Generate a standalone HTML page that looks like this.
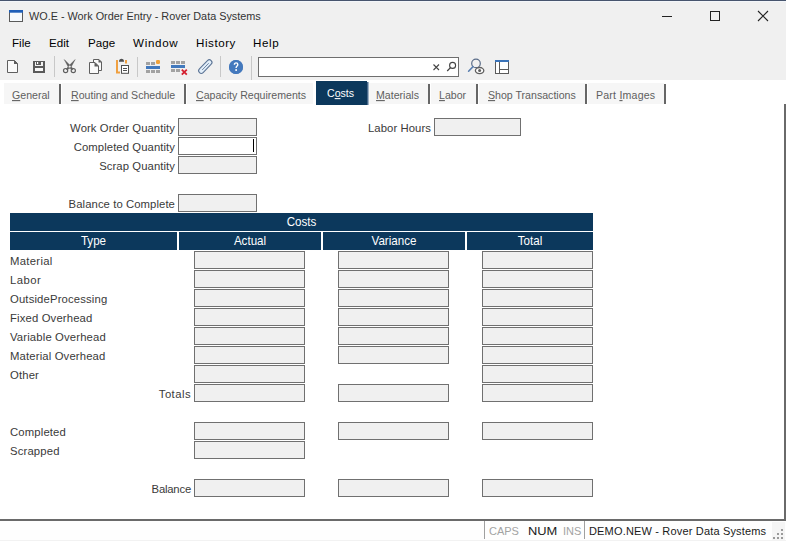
<!DOCTYPE html>
<html><head><meta charset="utf-8">
<style>
*{margin:0;padding:0;box-sizing:border-box}
html,body{width:786px;height:541px;overflow:hidden;background:#fff}
body{position:relative;font-family:"Liberation Sans",sans-serif;color:#222}
.a{position:absolute;white-space:nowrap;line-height:1}
#chrome{position:absolute;left:0;top:0;width:786px;height:80px;background:#f0f0f0}
#topline{position:absolute;left:0;top:0;width:786px;height:1px;background:#47556e}
.menu{font-size:11.6px;color:#000;top:37px}
.title{font-size:10.85px;color:#333;top:11px}
.sep{position:absolute;width:1px;background:#c9c9c9}
.tabbg{position:absolute;top:83px;height:21px;background:#f6f6f6}
.tsep{position:absolute;top:84px;width:2px;height:20px;background:#666}
.tab{font-size:10.6px;color:#5e5e5e;top:90px;transform:scaleY(1.07);transform-origin:0 9px}
.tab u{text-decoration:underline;text-underline-offset:1px}
.lbl{font-size:11.3px;color:#3a3a3a;margin-top:1px;letter-spacing:0.15px}
.fld{position:absolute;height:18px;border:1px solid #707070;background:#f0f0f0}
.hdr{position:absolute;background:#0c385c}
.htx{font-size:11.6px;color:#fff;transform:scaleY(1.1);transform-origin:50% 9.8px}
.sb{font-size:11px;top:526px}
</style></head><body>
<div id="chrome"></div>
<div id="topline"></div><div class="a" style="left:0;top:1px;width:786px;height:1px;background:#f3f6fa"></div>

<!-- title bar -->
<svg class="a" style="left:8px;top:9px" width="16" height="14" viewBox="0 0 16 14">
  <rect x="1.5" y="1.5" width="13" height="11" fill="#f6fafd" stroke="#5a5a5a" stroke-width="1"/>
  <rect x="1" y="1" width="14" height="2.7" fill="#1f5fb8"/>
</svg>
<div class="a title" style="left:29px">WO.E - Work Order Entry - Rover Data Systems</div>
<div class="a" style="left:662px;top:16px;width:10px;height:1px;background:#222"></div>
<div class="a" style="left:710px;top:11px;width:10px;height:10px;border:1px solid #222"></div>
<svg class="a" style="left:757px;top:10px" width="12" height="12" viewBox="0 0 12 12"><path d="M1 1L11 11M11 1L1 11" stroke="#222" stroke-width="1.1"/></svg>

<!-- menu -->
<div class="a menu" style="left:12px">File</div>
<div class="a menu" style="left:49px">Edit</div>
<div class="a menu" style="left:88px">Page</div>
<div class="a menu" style="left:133px;letter-spacing:0.7px">Window</div>
<div class="a menu" style="left:196px;letter-spacing:0.55px">History</div>
<div class="a menu" style="left:253px;letter-spacing:0.6px">Help</div>

<!-- toolbar -->
<div id="toolbar"><svg class="a" style="left:0;top:50px" width="520" height="30" viewBox="0 50 520 30">
 <!-- new -->
 <path d="M7.5 60.5H14.5L17.5 63.5V72.5H7.5Z" fill="#fafafa" stroke="#5f5f5f" stroke-width="1"/>
 <path d="M14 60L18 64H14Z" fill="#5f5f5f"/>
 <!-- save -->
 <rect x="33" y="61" width="12" height="12" fill="#5a5a5a"/>
 <rect x="35" y="62" width="8" height="4" fill="#f2f2f2"/>
 <rect x="36" y="61" width="5" height="4" fill="#5a5a5a"/>
 <rect x="37" y="62" width="1.2" height="2" fill="#fff"/>
 <rect x="35" y="68" width="8" height="3" fill="#f7f7f7"/>
 <!-- sep -->
 <rect x="54" y="56" width="1" height="21" fill="#c8c8c8"/>
 <!-- scissors -->
 <path d="M64.3 59.6L71.2 66.6L73.2 69.2L72.2 69.8L68.4 67.2Z M75.1 59.6L68.2 66.6L66.2 69.2L67.2 69.8L71 67.2Z" fill="#5f5f5f" stroke="#5f5f5f" stroke-width="0.5" stroke-linejoin="round"/>
 <circle cx="65.6" cy="70.6" r="2.1" fill="none" stroke="#5f5f5f" stroke-width="1.2"/>
 <circle cx="73.3" cy="70.6" r="2.1" fill="none" stroke="#5f5f5f" stroke-width="1.2"/>
 <!-- copy -->
 <path d="M93.5 59.5H99L101.5 62V70.5H93.5Z" fill="#fafafa" stroke="#5f5f5f" stroke-width="1"/>
 <path d="M98.5 59L102 62.5H98.5Z" fill="#5f5f5f"/>
 <path d="M89.5 62.5H95L98.5 66V73.5H89.5Z" fill="#fafafa" stroke="#5f5f5f" stroke-width="1"/>
 <path d="M94.5 62L99 66.5H94.5Z" fill="#5f5f5f"/>
 <!-- paste -->
 <path d="M117 60V72.5H120" fill="none" stroke="#f0a040" stroke-width="2"/>
 <rect x="125" y="60" width="2" height="3.5" fill="#f0a040"/>
 <path d="M119 61.8H124V60.5Q123.5 58.8 121.5 58.8Q119.5 58.8 119 60.5Z" fill="#505050"/>
 <rect x="121.5" y="65.5" width="7" height="7.8" fill="#fff" stroke="#505050" stroke-width="1"/>
 <rect x="123" y="68" width="4" height="1" fill="#505050"/>
 <rect x="123" y="70" width="4" height="1" fill="#505050"/>
 <!-- sep -->
 <rect x="137" y="57" width="1" height="20" fill="#c8c8c8"/>
 <!-- insert rows -->
 <rect x="146" y="62" width="4" height="3" fill="#a2a2a2"/>
 <rect x="151" y="62" width="4" height="3" fill="#a2a2a2"/>
 <rect x="156" y="60" width="4" height="4" rx="1.2" fill="#f2a33a"/>
 <rect x="146" y="66" width="14" height="3" fill="#4279bd"/>
 <rect x="146" y="70" width="4" height="3" fill="#a2a2a2"/>
 <rect x="151" y="70" width="4" height="3" fill="#a2a2a2"/>
 <rect x="156" y="70" width="4" height="3" fill="#a2a2a2"/>
 <!-- delete rows -->
 <rect x="171" y="61" width="4" height="3" fill="#a2a2a2"/>
 <rect x="176" y="61" width="4" height="3" fill="#a2a2a2"/>
 <rect x="181" y="61" width="4" height="3" fill="#a2a2a2"/>
 <rect x="171" y="65" width="14" height="3" fill="#4279bd"/>
 <rect x="171" y="69" width="4" height="3" fill="#a2a2a2"/>
 <rect x="176" y="69" width="4" height="3" fill="#a2a2a2"/>
 <path d="M181.8 69.6L186.8 74.6M186.8 69.6L181.8 74.6" stroke="#d42030" stroke-width="1.8"/>
 <!-- paperclip -->
 <g transform="translate(205.3 66.6) rotate(-46)">
  <rect x="-8.4" y="-2.6" width="16.8" height="5.2" rx="2.6" fill="#e2eef9" stroke="#5d7596" stroke-width="1.1"/>
  <path d="M4.8 0.1H-4.6" stroke="#6a80a0" stroke-width="0.9"/>
 </g>
 <!-- sep -->
 <rect x="220" y="56" width="1" height="21" fill="#c8c8c8"/>
 <!-- help -->
 <circle cx="236" cy="67" r="7" fill="#3d72b8"/>
 <circle cx="236" cy="67" r="7" fill="#4479bd"/>
 <path d="M234.4 64.8Q234.4 62.9 236.1 62.9Q237.8 62.9 237.8 64.6Q237.8 65.6 236.9 66.2Q236.1 66.8 236.1 68" fill="none" stroke="#fff" stroke-width="1.4"/>
 <rect x="235.3" y="69.2" width="1.7" height="1.7" fill="#fff"/>
 <!-- sep -->
 <rect x="251" y="56" width="1" height="24" fill="#c8c8c8"/>
 <!-- search box -->
 <rect x="258.5" y="57.5" width="200" height="19" fill="#fff" stroke="#6e6e6e" stroke-width="1"/>
 <path d="M433.5 64.5L439 70M439 64.5L433.5 70" stroke="#444" stroke-width="1.1"/>
 <circle cx="452.6" cy="65.4" r="3.0" fill="none" stroke="#444" stroke-width="1.1"/>
 <path d="M450.5 67.6L447.2 71.0" stroke="#444" stroke-width="1.3"/>
 <!-- find eye -->
 <circle cx="476" cy="63.4" r="4.3" fill="none" stroke="#5a6c88" stroke-width="1.2"/>
 <path d="M473 66.6L468.6 71.2" stroke="#5a7fb0" stroke-width="1.6" stroke-linecap="round"/>
 <ellipse cx="479.6" cy="70.6" rx="4.2" ry="3.1" fill="#fff" stroke="#5f5f5f" stroke-width="1.3"/>
 <circle cx="479.6" cy="70.6" r="1.5" fill="#5f5f5f"/>
 <!-- layout -->
 <rect x="495.5" y="60.5" width="13" height="13" fill="#fff" stroke="#5a5a5a" stroke-width="1"/>
 <rect x="495" y="60" width="14" height="2" fill="#3a73b8"/>
 <path d="M499.5 62V73.5M499.5 69.5H508.5" stroke="#5a5a5a" stroke-width="1"/>
</svg>
</div><!--/tb-->

<!-- tabs -->
<div class="tabbg" style="left:4px;width:309px"></div><div class="tabbg" style="left:369px;width:295px"></div>
<div class="tsep" style="left:59px"></div><div class="a" style="left:61px;top:83px;width:1px;height:21px;background:#fff"></div>
<div class="tsep" style="left:184px"></div><div class="a" style="left:186px;top:83px;width:1px;height:21px;background:#fff"></div>
<div class="a" style="left:367px;top:82px;height:23px;width:1px;background:#46678a"></div><div class="a" style="left:368px;top:82px;height:23px;width:1px;background:#9fb2c4"></div>
<div class="tsep" style="left:428px"></div><div class="a" style="left:430px;top:83px;width:1px;height:21px;background:#fff"></div>
<div class="tsep" style="left:476px"></div><div class="a" style="left:478px;top:83px;width:1px;height:21px;background:#fff"></div>
<div class="tsep" style="left:585px"></div><div class="a" style="left:587px;top:83px;width:1px;height:21px;background:#fff"></div>
<div class="tsep" style="left:664px"></div><div class="a" style="left:666px;top:83px;width:1px;height:21px;background:#fff"></div>
<div class="a" style="left:316px;top:81px;width:51px;height:24px;background:#0c385c"></div>
<div class="a tab" style="left:12px"><u>G</u>eneral</div>
<div class="a tab" style="left:71px"><u>R</u>outing and Schedule</div>
<div class="a tab" style="left:196px"><u>C</u>apacity Requirements</div>
<div class="a tab" style="left:327px;top:88px;color:#fff">C<u>o</u>sts</div>
<div class="a tab" style="left:376px"><u>M</u>aterials</div>
<div class="a tab" style="left:439px"><u>L</u>abor</div>
<div class="a tab" style="left:488px"><u>S</u>hop Transactions</div>
<div class="a tab" style="left:596px;letter-spacing:0.2px">Part <u>I</u>mages</div>

<!-- content frame -->
<div class="a" style="left:784px;top:104px;width:2px;height:416px;background:#6a6a6a"></div>
<div class="a" style="left:0;top:519px;width:786px;height:2px;background:#6a6a6a"></div>

<div id="form"><div class="a lbl" style="right:611px;top:122px;letter-spacing:0.08px">Work Order Quantity</div>
<div class="fld" style="left:178px;top:118px;width:79px"></div>
<div class="a lbl" style="right:611px;top:141px;letter-spacing:0.08px">Completed Quantity</div>
<div class="fld" style="left:178px;top:137px;width:79px;background:#fff"></div>
<div class="a lbl" style="right:611px;top:160px;letter-spacing:0.08px">Scrap Quantity</div>
<div class="fld" style="left:178px;top:156px;width:79px"></div>
<div class="a lbl" style="right:611px;top:198px;letter-spacing:0.08px">Balance to Complete</div>
<div class="fld" style="left:178px;top:194px;width:79px"></div>
<div class="a" style="left:253px;top:139px;width:1px;height:13px;background:#000"></div>
<div class="a lbl" style="right:355px;top:122px;letter-spacing:0.08px">Labor Hours</div>
<div class="fld" style="left:434px;top:118px;width:87px"></div>
<div class="hdr" style="left:10px;top:213px;width:583px;height:18px"></div>
<div class="a htx" style="left:10px;width:583px;text-align:center;top:216.2px">Costs</div>
<div class="hdr" style="left:10px;top:232px;width:167px;height:18px"></div>
<div class="a htx" style="left:10px;width:167px;text-align:center;top:235.2px">Type</div>
<div class="hdr" style="left:179px;top:232px;width:142px;height:18px"></div>
<div class="a htx" style="left:179px;width:142px;text-align:center;top:235.2px">Actual</div>
<div class="hdr" style="left:323px;top:232px;width:142px;height:18px"></div>
<div class="a htx" style="left:323px;width:142px;text-align:center;top:235.2px">Variance</div>
<div class="hdr" style="left:467px;top:232px;width:126px;height:18px"></div>
<div class="a htx" style="left:467px;width:126px;text-align:center;top:235.2px">Total</div>
<div class="a lbl" style="left:10px;top:255px;letter-spacing:0.3px">Material</div>
<div class="fld" style="left:194px;top:251px;width:111px"></div>
<div class="fld" style="left:338px;top:251px;width:111px"></div>
<div class="fld" style="left:482px;top:251px;width:111px"></div>
<div class="a lbl" style="left:10px;top:274px;letter-spacing:0.45px">Labor</div>
<div class="fld" style="left:194px;top:270px;width:111px"></div>
<div class="fld" style="left:338px;top:270px;width:111px"></div>
<div class="fld" style="left:482px;top:270px;width:111px"></div>
<div class="a lbl" style="left:10px;top:293px">OutsideProcessing</div>
<div class="fld" style="left:194px;top:289px;width:111px"></div>
<div class="fld" style="left:338px;top:289px;width:111px"></div>
<div class="fld" style="left:482px;top:289px;width:111px"></div>
<div class="a lbl" style="left:10px;top:312px">Fixed Overhead</div>
<div class="fld" style="left:194px;top:308px;width:111px"></div>
<div class="fld" style="left:338px;top:308px;width:111px"></div>
<div class="fld" style="left:482px;top:308px;width:111px"></div>
<div class="a lbl" style="left:10px;top:331px">Variable Overhead</div>
<div class="fld" style="left:194px;top:327px;width:111px"></div>
<div class="fld" style="left:338px;top:327px;width:111px"></div>
<div class="fld" style="left:482px;top:327px;width:111px"></div>
<div class="a lbl" style="left:10px;top:350px">Material Overhead</div>
<div class="fld" style="left:194px;top:346px;width:111px"></div>
<div class="fld" style="left:338px;top:346px;width:111px"></div>
<div class="fld" style="left:482px;top:346px;width:111px"></div>
<div class="a lbl" style="left:10px;top:369px">Other</div>
<div class="fld" style="left:194px;top:365px;width:111px"></div>
<div class="fld" style="left:482px;top:365px;width:111px"></div>
<div class="a lbl" style="right:595px;top:388px;letter-spacing:0.45px">Totals</div>
<div class="fld" style="left:194px;top:384px;width:111px"></div>
<div class="fld" style="left:338px;top:384px;width:111px"></div>
<div class="fld" style="left:482px;top:384px;width:111px"></div>
<div class="a lbl" style="left:10px;top:426px">Completed</div>
<div class="fld" style="left:194px;top:422px;width:111px"></div>
<div class="fld" style="left:338px;top:422px;width:111px"></div>
<div class="fld" style="left:482px;top:422px;width:111px"></div>
<div class="a lbl" style="left:10px;top:445px">Scrapped</div>
<div class="fld" style="left:194px;top:441px;width:111px"></div>
<div class="a lbl" style="right:595px;top:483px;letter-spacing:-0.2px">Balance</div>
<div class="fld" style="left:194px;top:479px;width:111px"></div>
<div class="fld" style="left:338px;top:479px;width:111px"></div>
<div class="fld" style="left:482px;top:479px;width:111px"></div></div><!--/form-->

<!-- status bar -->
<div class="a" style="left:0;top:521px;width:786px;height:20px;background:#fefefe"></div><div class="a" style="left:0;top:540px;width:786px;height:1px;background:#f2f2f2"></div>
<div class="a" style="left:484px;top:521px;width:1px;height:18px;background:#a0a0a0"></div>
<div class="a" style="left:584px;top:521px;width:1px;height:18px;background:#a0a0a0"></div>
<div class="a sb" style="left:489px;color:#a3a3a3">CAPS</div>
<div class="a sb" style="left:528px;color:#1a1a1a;transform:scaleX(1.17);transform-origin:0 0">NUM</div>
<div class="a sb" style="left:563px;color:#a3a3a3">INS</div>
<div class="a sb" style="left:589px;color:#1a1a1a;letter-spacing:0.17px">DEMO.NEW - Rover Data Systems</div>
<div class="a" style="left:772px;top:522px;width:13px;height:18px;background:#f5f5f5"></div>
<div class="a" style="left:773px;top:537px;width:2px;height:2px;background:#9a9a9a"></div>
<div class="a" style="left:777px;top:537px;width:2px;height:2px;background:#9a9a9a"></div>
<div class="a" style="left:781px;top:537px;width:2px;height:2px;background:#9a9a9a"></div>
<div class="a" style="left:777px;top:533px;width:2px;height:2px;background:#9a9a9a"></div>
<div class="a" style="left:781px;top:533px;width:2px;height:2px;background:#9a9a9a"></div>
<div class="a" style="left:781px;top:529px;width:2px;height:2px;background:#9a9a9a"></div>
</body></html>
